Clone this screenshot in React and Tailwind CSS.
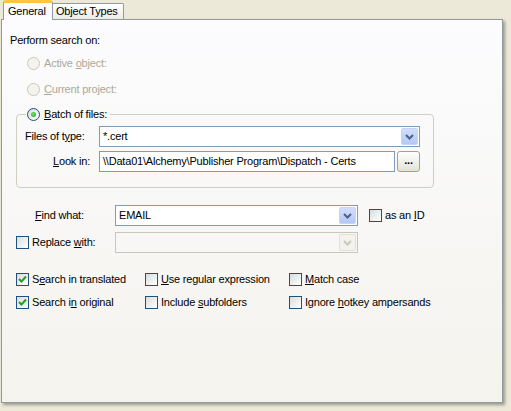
import React from 'react';

const Mn = ({ children }) => <u className="underline underline-offset-[1px]">{children}</u>;

const Check = ({ checked }) => (
  <div className="w-[13px] h-[13px] shrink-0 border border-[#1C5180] bg-gradient-to-br from-[#DCDCD7] to-white flex items-center justify-center">
    {checked && (
      <svg width="9" height="9" viewBox="0 0 9 9">
        <path d="M1 4 L3.5 6.5 L8 1.5" stroke="#21A121" strokeWidth="2" fill="none" />
      </svg>
    )}
  </div>
);

const Radio = ({ checked, disabled }) => (
  <div
    className={`w-[13px] h-[13px] shrink-0 rounded-full border flex items-center justify-center ${
      disabled ? 'border-[#CAC8BB] bg-[#F4F3EE]' : 'border-[#1C5180] bg-gradient-to-br from-[#DCDCD7] to-white'
    }`}
  >
    {checked && <div className="w-[5px] h-[5px] rounded-full bg-[radial-gradient(circle_at_40%_40%,#6FE06B,#21A121)]" />}
  </div>
);

const Arrow = ({ color }) => (
  <svg width="9" height="6" viewBox="0 0 9 6">
    <path d="M1 1 L4.5 4.5 L8 1" stroke={color} strokeWidth="2" fill="none" />
  </svg>
);

const Combo = ({ value, width, disabled }) => (
  <div
    className={`h-[21px] flex items-center border ${disabled ? 'border-[#C9C7BA]' : 'border-[#7F9DB9] bg-white'}`}
    style={{ width }}
  >
    <span className="flex-1 pl-[3px]">{value}</span>
    <div
      className={`w-[17px] h-[17px] mr-[1px] rounded-[2px] flex items-center justify-center ${
        disabled ? 'bg-[#F3F2EC] border border-[#E3E1D6]' : 'bg-gradient-to-b from-[#D2DEFC] to-[#B4C8F6] border border-[#C7D4F7]'
      }`}
    >
      <Arrow color={disabled ? '#C9C7BA' : '#4D6185'} />
    </div>
  </div>
);

const CheckItem = ({ checked, children }) => (
  <div className="flex items-center gap-[3px]">
    <Check checked={checked} />
    <span>{children}</span>
  </div>
);

export default function App() {
  return (
    <div className="w-[511px] h-[411px] bg-[#ECE9D8] overflow-hidden font-['Liberation_Sans',Arial,sans-serif] text-[11px] tracking-[-0.2px] text-black leading-none">
      <div className="flex items-start h-[19px] pl-[3px]">
        <div className="relative z-10 h-[20px] w-[50px] bg-[#FCFCFE] border-x border-[#919B9C] border-t-[3px] border-t-[#FFC83C] rounded-t-[3px] flex items-center pl-[4px] pb-[1px]">
          General
        </div>
        <div className="mt-[3px] h-[16px] w-[71px] bg-gradient-to-b from-white to-[#ECEBE6] border-t border-r border-[#919B9C] rounded-tr-[2px] flex items-center pl-[3px]">
          Object Types
        </div>
      </div>

      <div className="ml-[1px] w-[502px] h-[384px] border border-[#919B9C] bg-gradient-to-b from-[#FCFCFE] to-[#F4F3EE] shadow-[2px_2px_3px_rgba(0,0,0,0.35)]">
        <div className="h-[14px] mt-[13px] ml-[8px] flex items-center">Perform search on:</div>

        <div className="h-[13px] mt-[10px] ml-[25px] flex items-center gap-[4px] text-[#ACA899]">
          <Radio disabled />
          <span>Active <Mn>o</Mn>bject:</span>
        </div>
        <div className="h-[13px] mt-[13px] ml-[25px] flex items-center gap-[4px] text-[#ACA899]">
          <Radio disabled />
          <span><Mn>C</Mn>urrent project:</span>
        </div>

        <div className="relative mt-[18px] ml-[14px] w-[418px] h-[74px] border border-[#D0D0BF] rounded-[4px] pt-[11px]">
          <div className="absolute left-[9px] -top-[7px] h-[13px] flex items-center gap-[4px] bg-[#FAFAF8] pl-[1px] pr-[3px]">
            <Radio checked />
            <span><Mn>B</Mn>atch of files:</span>
          </div>

          <div className="flex items-center h-[21px]">
            <div className="w-[82px] pl-[8px]">Files of t<Mn>y</Mn>pe:</div>
            <Combo value="*.cert" width={321} />
          </div>
          <div className="flex items-center h-[21px] mt-[4px]">
            <div className="w-[82px] pr-[9px] text-right"><Mn>L</Mn>ook in:</div>
            <div className="w-[296px] h-[21px] border border-[#7F9DB9] bg-white flex items-center pl-[3px]">
              \\Data01\Alchemy\Publisher Program\Dispatch - Certs
            </div>
            <div className="ml-[2px] w-[23px] h-[21px] rounded-[3px] border border-[#A3A18F] bg-gradient-to-b from-white to-[#E3E2D8] flex items-end justify-center pb-[5px] font-bold">
              ...
            </div>
          </div>
        </div>

        <div className="flex items-center h-[21px] mt-[17px]">
          <div className="w-[113px] pl-[33px]"><Mn>F</Mn>ind what:</div>
          <Combo value="EMAIL" width={243} />
          <div className="ml-[11px] flex items-center gap-[3px]">
            <Check />
            <span>as an <Mn>I</Mn>D</span>
          </div>
        </div>

        <div className="flex items-center h-[21px] mt-[6px]">
          <div className="w-[113px] pl-[14px] flex items-center gap-[3px]">
            <Check />
            <span>Replace <Mn>w</Mn>ith:</span>
          </div>
          <Combo value="" width={243} disabled />
        </div>

        <div className="grid grid-cols-[129px_144px_1fr] ml-[14px] mt-[20px] h-[13px] items-center">
          <CheckItem checked>S<Mn>e</Mn>arch in translated</CheckItem>
          <CheckItem><Mn>U</Mn>se regular expression</CheckItem>
          <CheckItem><Mn>M</Mn>atch case</CheckItem>
        </div>
        <div className="grid grid-cols-[129px_144px_1fr] ml-[14px] mt-[10px] h-[13px] items-center">
          <CheckItem checked>Search i<Mn>n</Mn> original</CheckItem>
          <CheckItem>Include <Mn>s</Mn>ubfolders</CheckItem>
          <CheckItem>Ignore <Mn>h</Mn>otkey ampersands</CheckItem>
        </div>
      </div>
    </div>
  );
}
